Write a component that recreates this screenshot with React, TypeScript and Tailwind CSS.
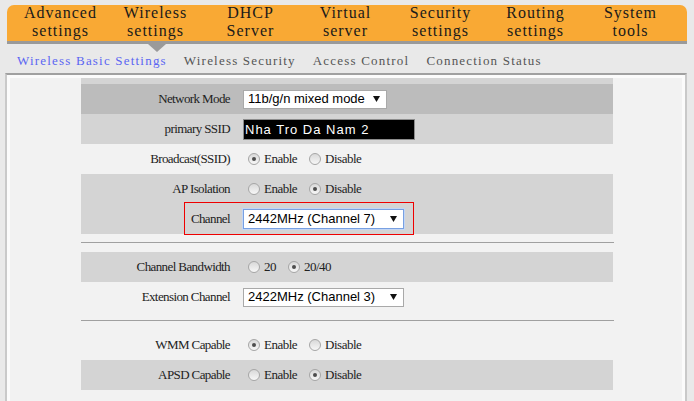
import React from "react";

const tabs = [
  ["Advanced", "settings"],
  ["Wireless", "settings"],
  ["DHCP", "Server"],
  ["Virtual", "server"],
  ["Security", "settings"],
  ["Routing", "settings"],
  ["System", "tools"],
];

const subTabs = ["Wireless Basic Settings", "Wireless Security", "Access Control", "Connection Status"];

function Radio({ checked, first }: { checked?: boolean; first?: boolean }) {
  return (
    <span
      className={`flex h-[12px] w-[12px] shrink-0 items-center justify-center rounded-full border border-[#a6a6a6] bg-gradient-to-b from-[#d9d9d9] to-[#f7f7f7] ${
        first ? "ml-[5px]" : "ml-[12px]"
      }`}
    >
      {checked && <span className="h-[4px] w-[4px] rounded-full bg-[#4d4d4d]" />}
    </span>
  );
}

function Option({ label, checked, first }: { label: string; checked?: boolean; first?: boolean }) {
  return (
    <>
      <Radio checked={checked} first={first} />
      <span className="ml-[4px]">{label}</span>
    </>
  );
}

function Arrow() {
  return (
    <svg width="7" height="6" viewBox="0 0 7 6">
      <path d="M0 0H7L3.5 6Z" fill="#111" />
    </svg>
  );
}

function Select({ value, className }: { value: string; className: string }) {
  return (
    <div
      className={`flex items-center justify-between bg-white pl-[4px] pr-[6px] font-['Liberation_Sans',Arial,sans-serif] text-[13px] tracking-normal text-black ${className}`}
    >
      <span>{value}</span>
      <Arrow />
    </div>
  );
}

function Row({
  label,
  bg,
  children,
}: {
  label: string;
  bg?: string;
  children?: React.ReactNode;
}) {
  return (
    <div className={`relative flex h-[30px] items-center ${bg ?? ""}`}>
      <div className="w-[156px] shrink-0 pr-[7px] text-right tracking-[-0.6px]">{label}</div>
      <div className="flex items-center pl-[6px]">{children}</div>
    </div>
  );
}

function Divider() {
  return <div className="mt-[8px] mb-[9px] h-px w-[533px] bg-[#a0a0a0]" />;
}

export default function App() {
  return (
    <div className="h-[401px] w-[694px] overflow-hidden bg-[#e9e9e9] pt-[5px] font-['Liberation_Serif','Times_New_Roman',serif]">
      {/* top menu */}
      <nav className="mx-[7px] flex h-[39px] rounded-t-[7px] border-b-[3px] border-[#9a9a9a] bg-[#f9a934] pl-[6px]">
        {tabs.map(([a, b], i) => (
          <div
            key={a}
            className="relative w-[95px] text-center text-[16px] leading-[18px] tracking-[1px] text-[#1a1a1a]"
          >
            <div className="-mt-[1px]">
              <div>{a}</div>
              <div>{b}</div>
            </div>
            {i === 1 && (
              <span className="absolute left-[40px] top-[39px] h-0 w-0 border-x-[9px] border-t-[8px] border-x-transparent border-t-[#9a9a9a]" />
            )}
          </div>
        ))}
      </nav>

      {/* sub menu */}
      <div className="flex h-[29px] gap-[17px] pl-[17px] pt-[6px] text-[13px] leading-[21px] tracking-[1.2px] text-[#555]">
        {subTabs.map((t, i) => (
          <span key={t} className={i === 0 ? "text-[#5b66f2]" : ""}>
            {t}
          </span>
        ))}
      </div>

      {/* content frame */}
      <div className="ml-[5px] h-[328px] w-[682px] border-x-2 border-t-2 border-x-[#c9c9c9] border-t-[#a0a0a0]">
        <div className="h-full border-x-[3px] border-t-[3px] border-[#fbfbfb] bg-[#f2f2f2]">
          <div className="ml-[71px] w-[532px] text-[13px] tracking-[-0.5px] text-[#222]">
            <div className="h-[6px] bg-[#d4d4d4]" />
            <Row label="Network Mode" bg="bg-[#bcbcbc]">
              <Select value="11b/g/n mixed mode" className="h-[19px] w-[144px] border border-[#a9a9a9]" />
            </Row>
            <Row label="primary SSID" bg="bg-[#d4d4d4]">
              <div className="h-[21px] w-[172px] border border-[#8c8c8c] bg-black pl-[1px] font-['Liberation_Sans',Arial,sans-serif] text-[13px] leading-[19px] tracking-[1px] text-white">
                Nha Tro Da Nam 2
              </div>
            </Row>
            <Row label="Broadcast(SSID)">
              <Option label="Enable" checked first />
              <Option label="Disable" />
            </Row>
            <Row label="AP Isolation" bg="bg-[#d4d4d4]">
              <Option label="Enable" first />
              <Option label="Disable" checked />
            </Row>
            <Row label="Channel" bg="bg-[#d4d4d4]">
              <Select
                value="2442MHz (Channel 7)"
                className="h-[20px] w-[161px] border border-[#78a0e2] shadow-[0_0_0_1px_#c3d6f4]"
              />
              <span className="absolute left-[103px] top-[-2px] h-[33px] w-[230px] border border-[#ee0000]" />
            </Row>
            <Divider />
            <Row label="Channel Bandwidth" bg="bg-[#d4d4d4]">
              <Option label="20" first />
              <Option label="20/40" checked />
            </Row>
            <Row label="Extension Channel">
              <Select value="2422MHz (Channel 3)" className="h-[19px] w-[161px] border border-[#a9a9a9]" />
            </Row>
            <Divider />
            <Row label="WMM Capable">
              <Option label="Enable" checked first />
              <Option label="Disable" />
            </Row>
            <Row label="APSD Capable" bg="bg-[#d4d4d4]">
              <Option label="Enable" first />
              <Option label="Disable" checked />
            </Row>
          </div>
        </div>
      </div>
    </div>
  );
}
